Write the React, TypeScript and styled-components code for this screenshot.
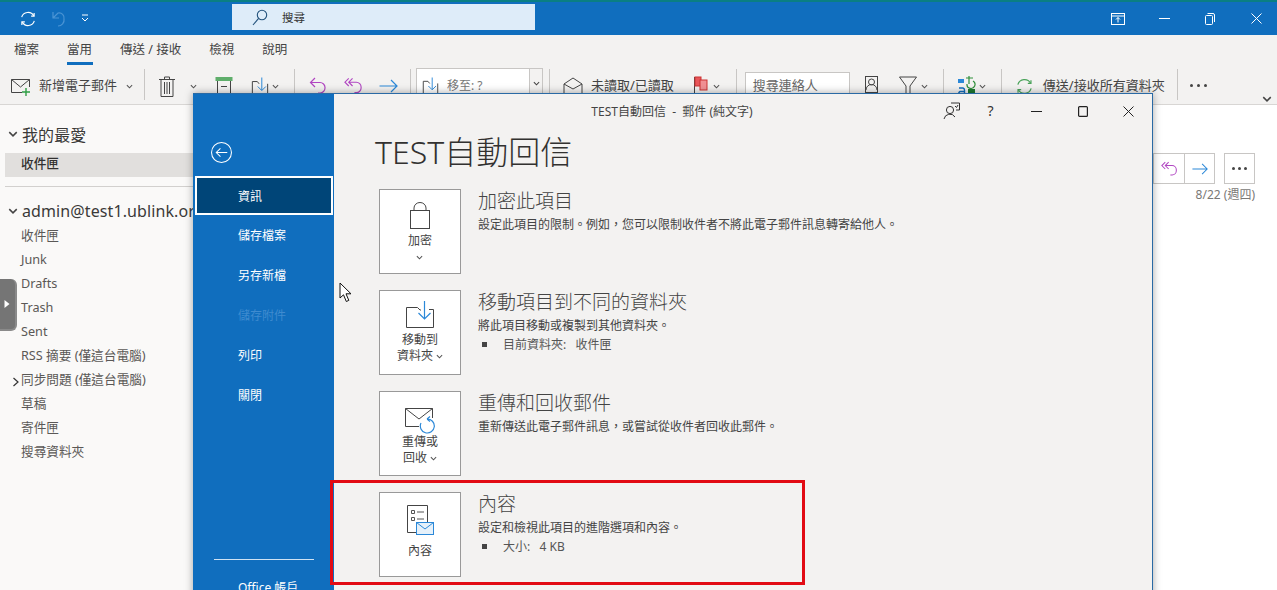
import styled, { createGlobalStyle } from "styled-components";
import type { ReactNode } from "react";

const CJK = `"Noto Sans", "Noto Sans CJK TC", sans-serif`;

const Chevron = ({ size = 7, dark }: { size?: number; dark?: boolean }) => (
  <svg width={size} height={size} viewBox="0 0 8 8" fill="none" stroke={dark ? "#444" : "#555"} strokeWidth="1.2">
    <path d="M1 2.5 L4 5.5 L7 2.5" />
  </svg>
);

const MoveIcon = ({ w = 18, h = 23 }: { w?: number; h?: number }) => (
  <svg width={w} height={h} viewBox="0 0 20 24" fill="none" strokeWidth="1.1">
    <path d="M1.5 6.5 H7 L9 9 M1.5 6.5 V21.5 H18.5 V9" stroke="#444" />
    <path d="M12 2 V16 M7.5 12 L12 16.5 L16.5 12" stroke="#2b88d8" />
  </svg>
);

const SyncIcon = ({ color, size }: { color: string; size: number }) => (
  <svg width={size} height={size} viewBox="0 0 20 20" fill="none" stroke={color} strokeWidth="1.3">
    <path d="M3 8 A7.3 7.3 0 0 1 16.4 6.5 M17 12 A7.3 7.3 0 0 1 3.6 13.5" />
    <path d="M13.5 6.8 H16.8 V3.4 M6.5 13.2 H3.2 V16.6" />
  </svg>
);

const ReplyIcon = ({ color, w = 18 }: { color: string; w?: number }) => (
  <svg width={w} height="20" viewBox="0 0 18 20" fill="none" stroke={color} strokeWidth="1.2">
    <path d="M6 2 L1.5 6.5 L6 11 M1.5 6.5 H11 A5 5 0 0 1 16 11.5 V12 A5 5 0 0 1 11 17 H9" />
  </svg>
);

const ReplyAllIcon = ({ w = 19 }: { w?: number }) => (
  <svg width={w} height="20" viewBox="0 0 20 20" fill="none" stroke="#b146c2" strokeWidth="1.2">
    <path d="M5 2 L1 6 L5 10 M9 2 L5 6 L9 10 M5 6 H13 A5 5 0 0 1 18 11 V12 A5 5 0 0 1 13 17 H11" />
  </svg>
);

const ForwardIcon = ({ w = 19 }: { w?: number }) => (
  <svg width={w} height="14" viewBox="0 0 19 14" fill="none" stroke="#2b88d8" strokeWidth="1.2">
    <path d="M0.5 7 H18 M12 1 L18 7 L12 13" />
  </svg>
);

export default function App() {
  return (
    <Page>
      <GlobalStyle />
      <TitleBar>
        <QuickAccess>
          <SyncIcon color="#ffffff" size={18} />
          <svg width="16" height="18" viewBox="0 0 16 18" fill="none" stroke="#4b94d4" strokeWidth="1.2">
            <path d="M2 2 V8 H8 M2 8 L7 3 A5 5 0 0 1 13 9 A6 6 0 0 1 7 16" />
          </svg>
          <svg width="8" height="9" viewBox="0 0 8 9" fill="none" stroke="#fff" strokeWidth="1">
            <path d="M1 1 H7 M1 4 L4 7 L7 4" />
          </svg>
        </QuickAccess>
        <SearchBox>
          <svg width="16" height="17" viewBox="0 0 16 17" fill="none" stroke="#23527c" strokeWidth="1.1">
            <circle cx="10" cy="6" r="4.7" />
            <path d="M6.6 9.4 L1 16" />
          </svg>
          <span>搜尋</span>
        </SearchBox>
        <WindowButtons>
          <svg width="14" height="12" viewBox="0 0 14 12" fill="none" stroke="#fff" strokeWidth="1">
            <rect x="0.5" y="0.5" width="13" height="11" />
            <path d="M0.5 3 H13.5 M7 9.5 V4.5 M5 6.5 L7 4.5 L9 6.5" />
          </svg>
          <svg width="11" height="11" viewBox="0 0 11 11" stroke="#fff" strokeWidth="1">
            <path d="M0 5.5 H11" />
          </svg>
          <svg width="10" height="12" viewBox="0 0 10 12" fill="none" stroke="#fff" strokeWidth="1">
            <rect x="0.5" y="2.5" width="7" height="9" rx="1" />
            <path d="M2.5 0.5 H8 A1.5 1.5 0 0 1 9.5 2 V9" />
          </svg>
          <svg width="11" height="11" viewBox="0 0 11 11" stroke="#fff" strokeWidth="1">
            <path d="M0.5 0.5 L10.5 10.5 M10.5 0.5 L0.5 10.5" />
          </svg>
        </WindowButtons>
      </TitleBar>

      <TabRow>
        <Tab>檔案</Tab>
        <Tab $active>當用</Tab>
        <Tab>傳送 / 接收</Tab>
        <Tab>檢視</Tab>
        <Tab>說明</Tab>
      </TabRow>

      <Ribbon>
        <RibbonItem $left={11}>
          <svg width="20" height="19" viewBox="0 0 20 19" fill="none">
            <path d="M0.5 2.5 H18.5 V10 M0.5 2.5 V15.5 H11 M0.5 2.5 L9.5 10 L18.5 2.5" stroke="#444" />
            <path d="M15 11 V19 M11 15 H19" stroke="#2f9e44" strokeWidth="1.4" />
          </svg>
        </RibbonItem>
        <RibbonText $left={8}>新增電子郵件</RibbonText>
        <RibbonItem $left={9}><Chevron /></RibbonItem>
        <RibbonDivider $left={11} />
        <RibbonItem $left={14}>
          <svg width="16" height="21" viewBox="0 0 16 21" fill="none" stroke="#444">
            <path d="M0 3.5 H16 M5.5 3.5 V1 H10.5 V3.5 M2 3.5 V20.5 H14 V3.5 M5.5 6 V18 M8 6 V18 M10.5 6 V18" />
          </svg>
        </RibbonItem>
        <RibbonItem $left={15}><Chevron /></RibbonItem>
        <RibbonItem $left={18}>
          <svg width="18" height="18" viewBox="0 0 17 18" fill="none">
            <rect x="0" y="0" width="17" height="4" fill="#5fae6b" />
            <path d="M2 4 V17.5 H15 V4 M5.5 9.5 H11.5" stroke="#444" />
          </svg>
        </RibbonItem>
        <RibbonItem $left={18}><MoveIcon /></RibbonItem>
        <RibbonItem $left={3}><Chevron /></RibbonItem>
        <RibbonDivider $left={15} />
        <RibbonItem $left={14}><ReplyIcon color="#b146c2" /></RibbonItem>
        <RibbonItem $left={17}><ReplyAllIcon /></RibbonItem>
        <RibbonItem $left={16}><ForwardIcon /></RibbonItem>
        <RibbonDivider $left={12} />
        <MoveCombo>
          <MoveComboField>
            <MoveIcon w={17} h={22} />
            <span>移至: ?</span>
          </MoveComboField>
          <MoveComboArrow><Chevron dark /></MoveComboArrow>
        </MoveCombo>
        <RibbonDivider $left={6} />
        <RibbonItem $left={13}>
          <svg width="20" height="18" viewBox="0 0 20 18" fill="none" stroke="#444">
            <path d="M1 7 L10 1 L19 7 V17.5 H1 Z M1 7 L10 12 L19 7" />
          </svg>
        </RibbonItem>
        <RibbonText $left={8}>未讀取/已讀取</RibbonText>
        <RibbonItem $left={20}>
          <svg width="14" height="20" viewBox="0 0 14 20" fill="none">
            <path d="M0.5 1 V20" stroke="#444" />
            <rect x="1" y="1" width="6" height="9" fill="#e8565a" stroke="#c33" />
            <rect x="6" y="4" width="7" height="10" fill="#f09094" stroke="#c33" />
          </svg>
        </RibbonItem>
        <RibbonItem $left={5}><Chevron /></RibbonItem>
        <RibbonDivider $left={16} />
        <ContactSearch>搜尋連絡人</ContactSearch>
        <RibbonItem $left={15}>
          <svg width="13" height="21" viewBox="0 0 13 21" fill="none" stroke="#444">
            <rect x="0.5" y="0.5" width="12" height="20" />
            <circle cx="6.5" cy="6" r="3" />
            <path d="M1 14 A5.5 5.5 0 0 1 12 14 M0.5 16.5 H12.5" />
          </svg>
        </RibbonItem>
        <RibbonItem $left={21}>
          <svg width="18" height="21" viewBox="0 0 18 21" fill="none" stroke="#444">
            <path d="M0.5 1 H17.5 L11 10 V20 H7 V10 Z" />
          </svg>
        </RibbonItem>
        <RibbonItem $left={4}><Chevron /></RibbonItem>
        <RibbonDivider $left={15} />
        <RibbonItem $left={13}>
          <svg width="19" height="22" viewBox="0 0 19 22" fill="none">
            <path d="M1 4 H7 V8 H1 Z" fill="#2b88d8" />
            <path d="M2 13 H6 A2 2 0 0 1 7.5 15 V21 H3 A2.5 2.5 0 0 1 3 16.5 H7.5" stroke="#106ebe" strokeWidth="1.4" />
            <path d="M9 3 H16 M12 1 V9 M16 6 A4 4 0 1 1 10 9" stroke="#2f8f3a" strokeWidth="1.2" />
            <path d="M11 14 H18 V21 H11 Z" fill="#1c7a32" />
          </svg>
        </RibbonItem>
        <RibbonItem $left={3}><Chevron /></RibbonItem>
        <RibbonDivider $left={15} />
        <RibbonItem $left={13}><SyncIcon color="#4aa35a" size={19} /></RibbonItem>
        <RibbonText $left={9}>傳送/接收所有資料夾</RibbonText>
        <RibbonDivider $left={12} />
        <RibbonDots $left={12}>
          <i /><i /><i />
        </RibbonDots>
        <CollapseRibbon><Chevron size={10} dark /></CollapseRibbon>
      </Ribbon>

      <Body>
        <FolderPane>
          <FolderHeading $pad={7}><Chevron size={10} dark />我的最愛</FolderHeading>
          <FolderRow $selected>收件匣</FolderRow>
          <PaneRule />
          <FolderHeading $pad={0}><Chevron size={10} dark />admin@test1.ublink.org</FolderHeading>
          {["收件匣", "Junk", "Drafts", "Trash", "Sent", "RSS 摘要 (僅這台電腦)"].map((f) => (
            <FolderRow key={f}>{f}</FolderRow>
          ))}
          <FolderRow>
            <Expander>
              <svg width="8" height="10" viewBox="0 0 8 10" fill="none" stroke="#333" strokeWidth="1.2">
                <path d="M1.5 1 L6 5 L1.5 9" />
              </svg>
            </Expander>
            同步問題 (僅這台電腦)
          </FolderRow>
          {["草稿", "寄件匣", "搜尋資料夾"].map((f) => (
            <FolderRow key={f}>{f}</FolderRow>
          ))}
        </FolderPane>
        <ReadingPane>
          <ReadingActions>
            <ActionGroup>
              <ActionButton $joined><ReplyAllIcon w={17} /></ActionButton>
              <ActionButton><ForwardIcon w={16} /></ActionButton>
            </ActionGroup>
            <ActionButton><Dots><i /><i /><i /></Dots></ActionButton>
          </ReadingActions>
          <MailDate>8/22 (週四)</MailDate>
        </ReadingPane>
      </Body>

      <SideHandle>
        <svg width="6" height="8" viewBox="0 0 6 8"><path d="M0.5 0 L5.5 4 L0.5 8 Z" fill="#fff" /></svg>
      </SideHandle>

      <Backstage>
        <BackstageNav>
          <BackButton>
            <svg width="21" height="21" viewBox="0 0 20 20" fill="none" stroke="#fff" strokeWidth="1">
              <circle cx="10" cy="10" r="9.5" />
              <path d="M15.5 10 H5 M9 6 L5 10 L9 14" />
            </svg>
          </BackButton>
          <NavItem $active>資訊</NavItem>
          <NavItem>儲存檔案</NavItem>
          <NavItem>另存新檔</NavItem>
          <NavItem $disabled>儲存附件</NavItem>
          <NavItem>列印</NavItem>
          <NavItem>關閉</NavItem>
          <NavFooter>
            <NavRule />
            <NavItem>Office 帳戶</NavItem>
          </NavFooter>
        </BackstageNav>

        <BackstageMain>
          <DialogBar>
            <DialogCaption>TEST自動回信  -  郵件 (純文字)</DialogCaption>
            <DialogControls>
              <svg width="17" height="18" viewBox="0 0 17 18" fill="none" stroke="#333" strokeWidth="1">
                <circle cx="7" cy="8" r="3.6" />
                <path d="M1 17 A6 6 0 0 1 12 15 M8 1 H16.5 V8 H13 M12 4 L13.5 5.5 L15 3" />
              </svg>
              <HelpMark>?</HelpMark>
              <svg width="11" height="11" viewBox="0 0 11 11" stroke="#222" strokeWidth="1">
                <path d="M0 5.5 H11" />
              </svg>
              <svg width="10" height="11" viewBox="0 0 10 11" fill="none" stroke="#222" strokeWidth="1.2">
                <rect x="0.6" y="0.6" width="8.8" height="9.8" rx="1" />
              </svg>
              <svg width="11" height="11" viewBox="0 0 11 11" stroke="#222" strokeWidth="1">
                <path d="M0.5 0.5 L10.5 10.5 M10.5 0.5 L0.5 10.5" />
              </svg>
            </DialogControls>
          </DialogBar>

          <PageTitle>TEST自動回信</PageTitle>

          <InfoList>
            <InfoSection
              iconHeight={27}
              labelGap={4}
              icon={
                <svg width="20" height="27" viewBox="0 0 20 27" fill="none" stroke="#444">
                  <path d="M4 8 V6 A6 5.5 0 0 1 16 6 V8" />
                  <rect x="0.5" y="8.5" width="19" height="18" />
                </svg>
              }
              label={<>加密<br /><Chevron /></>}
              title="加密此項目"
              text="設定此項目的限制。例如，您可以限制收件者不將此電子郵件訊息轉寄給他人。"
            />
            <InfoSection
              iconHeight={25}
              labelGap={4}
              icon={
                <svg width="28" height="27" viewBox="0 0 28 27" fill="none" strokeWidth="1">
                  <path d="M0.5 9 V26.5 H27.5 V8.5 H23 M0.5 9 V6.5 H11.5 L14 9 H15" stroke="#444" />
                  <path d="M18.5 0 V18 M12.5 12 L18.5 18 L24.5 12" stroke="#2b88d8" strokeWidth="1.2" />
                </svg>
              }
              label={<>移動到<br />資料夾 <Chevron /></>}
              title="移動項目到不同的資料夾"
              text="將此項目移動或複製到其他資料夾。"
              detail="目前資料夾:   收件匣"
            />
            <InfoSection
              iconHeight={30}
              labelGap={0}
              icon={
                <svg width="30" height="26" viewBox="0 0 30 26" fill="none" strokeWidth="1">
                  <path d="M14 18.5 H0.5 V0.5 H27.5 V10 M0.5 0.5 L14 11 L27.5 0.5" stroke="#444" />
                  <path d="M22 11 A7 7 0 1 1 16 15 M22 11 L25 8.5 M22 11 L25 13.5" stroke="#2b88d8" strokeWidth="1.2" />
                </svg>
              }
              label={<>重傳或<br />回收 <Chevron /></>}
              title="重傳和回收郵件"
              text="重新傳送此電子郵件訊息，或嘗試從收件者回收此郵件。"
            />
            <InfoSection
              iconHeight={30}
              labelGap={8}
              icon={
                <svg width="27" height="30" viewBox="0 0 27 30" fill="none" strokeWidth="1">
                  <path d="M20.5 17 V0.5 H0.5 V27.5 H9" stroke="#444" />
                  <path d="M4.5 5.5 H7.5 V8.5 H4.5 Z M4.5 12.5 H7.5 V15.5 H4.5 Z M10 7 H17 M10 14 H17" stroke="#555" />
                  <rect x="9.5" y="17.5" width="17" height="12" fill="#e6f1fa" stroke="#2b88d8" />
                  <path d="M9.5 17.5 L18 24 L26.5 17.5" stroke="#2b88d8" />
                </svg>
              }
              label="內容"
              title="內容"
              text="設定和檢視此項目的進階選項和內容。"
              detail="大小:   4 KB"
            />
          </InfoList>
        </BackstageMain>
      </Backstage>

      <Highlight />

      <MouseCursor>
        <svg width="14" height="21" viewBox="0 0 14 21">
          <path d="M1 1 V16 L4.5 12.8 L7.3 19.5 L9.8 18.4 L7 11.8 H12 Z" fill="#fff" stroke="#111" strokeWidth="1" />
        </svg>
      </MouseCursor>
    </Page>
  );
}

function InfoSection(props: {
  icon: ReactNode;
  iconHeight: number;
  labelGap: number;
  label: ReactNode;
  title: string;
  text: string;
  detail?: string;
}) {
  return (
    <InfoRow>
      <InfoButton>
        <InfoIcon $height={props.iconHeight}>{props.icon}</InfoIcon>
        <InfoLabel $gap={props.labelGap}>{props.label}</InfoLabel>
      </InfoButton>
      <InfoText>
        <InfoTitle>{props.title}</InfoTitle>
        <InfoDesc>{props.text}</InfoDesc>
        {props.detail && <InfoDetail>{props.detail}</InfoDetail>}
      </InfoText>
    </InfoRow>
  );
}

/* ===== styled-components ===== */

const GlobalStyle = createGlobalStyle`
  * { box-sizing: border-box; }
  html, body { margin: 0; padding: 0; background: #fff; }
  body { font-family: ${CJK}; color: #323130; }
`;

const Page = styled.div`
  position: relative;
  width: 1277px;
  height: 590px;
  overflow: hidden;
  display: flex;
  flex-direction: column;
  background: #fff;
`;

const TitleBar = styled.header`
  height: 35px;
  flex: none;
  display: flex;
  align-items: center;
  background: #106ebe;
  border-top: 2px solid #0a7f83;
`;

const QuickAccess = styled.div`
  width: 232px;
  padding-left: 19px;
  display: flex;
  align-items: center;
  gap: 14px;
`;

const SearchBox = styled.div`
  width: 303px;
  height: 26px;
  margin-top: -3px;
  padding-left: 20px;
  display: flex;
  align-items: center;
  gap: 14px;
  background: #deecf9;
  font-size: 11.5px;
  color: #333;
`;

const WindowButtons = styled.div`
  margin-left: auto;
  margin-right: -2px;
  display: grid;
  grid-template-columns: repeat(4, 46px);
  justify-items: center;
  align-items: center;
`;

const TabRow = styled.nav`
  height: 33px;
  flex: none;
  display: flex;
  padding-left: 14px;
  gap: 28px;
  background: #f3f2f1;
`;

const Tab = styled.div<{ $active?: boolean }>`
  position: relative;
  padding-top: 6px;
  font-size: 12.5px;
  line-height: 17px;
  color: #444;
  white-space: nowrap;

  &::after {
    content: "";
    display: ${(p) => (p.$active ? "block" : "none")};
    position: absolute;
    left: 0;
    right: -1px;
    top: 27px;
    height: 3px;
    background: #106ebe;
  }
`;

const Ribbon = styled.div`
  position: relative;
  height: 37px;
  flex: none;
  display: flex;
  align-items: flex-start;
  background: #f3f2f1;
  border-bottom: 1px solid #d8d6d4;
`;

const RibbonItem = styled.div<{ $left: number }>`
  margin-left: ${(p) => p.$left}px;
  margin-top: 6px;
  height: 24px;
  display: flex;
  align-items: center;
  flex: none;
`;

const RibbonText = styled.span<{ $left: number }>`
  margin-left: ${(p) => p.$left}px;
  margin-top: 5px;
  height: 24px;
  line-height: 24px;
  font-size: 13px;
  color: #444;
  white-space: nowrap;
  flex: none;
`;

const RibbonDivider = styled.div<{ $left: number }>`
  margin-left: ${(p) => p.$left}px;
  margin-top: 1px;
  width: 1px;
  height: 31px;
  flex: none;
  background: #c8c6c4;
`;

const MoveCombo = styled.div`
  margin-left: 5px;
  width: 127px;
  height: 30px;
  flex: none;
  display: flex;
  background: #fff;
  border: 1px solid #c8c6c4;
`;

const MoveComboField = styled.div`
  flex: 1;
  padding-left: 5px;
  display: flex;
  align-items: flex-start;
  gap: 8px;
  padding-top: 6px;
  font-size: 12px;
  line-height: 22px;
  color: #777;
`;

const MoveComboArrow = styled.div`
  width: 13px;
  padding-top: 11px;
  display: flex;
  justify-content: center;
  border-left: 1px solid #c8c6c4;
  background: #f3f2f1;
`;

const ContactSearch = styled.div`
  margin-left: 8px;
  margin-top: 4px;
  width: 105px;
  height: 30px;
  padding: 3px 0 0 7px;
  flex: none;
  font-size: 13px;
  line-height: 18px;
  color: #666;
  background: #fff;
  border: 1px solid #c8c6c4;
`;

const RibbonDots = styled.div<{ $left: number }>`
  margin-left: ${(p) => p.$left}px;
  margin-top: 16px;
  display: flex;
  gap: 4px;

  i {
    width: 3px;
    height: 3px;
    border-radius: 50%;
    background: #444;
  }
`;

const CollapseRibbon = styled.div`
  position: absolute;
  right: 5px;
  bottom: 0;
  line-height: 0;
  height: 10px;
`;

const Body = styled.main`
  flex: 1;
  display: flex;
  min-height: 0;
`;

const FolderPane = styled.aside`
  width: 193px;
  flex: none;
  padding: 16px 0 0 5px;
  background: #faf9f8;
  white-space: nowrap;
`;

const FolderHeading = styled.div<{ $pad: number }>`
  height: ${(p) => 25 + p.$pad}px;
  padding-bottom: ${(p) => p.$pad}px;
  display: flex;
  align-items: center;
  gap: 4px;
  margin-left: 3px;
  font-size: 16px;
  letter-spacing: 0.1px;
  color: #3b3a39;

  svg {
    flex: none;
  }
`;

const FolderRow = styled.div<{ $selected?: boolean }>`
  position: relative;
  height: 24px;
  padding-left: 16px;
  line-height: ${(p) => (p.$selected ? "20px" : "24px")};
  font-size: 12.67px;
  color: ${(p) => (p.$selected ? "#323130" : "#5a5856")};
  font-weight: ${(p) => (p.$selected ? 500 : 400)};
  background: ${(p) => (p.$selected ? "#e1dfdd" : "transparent")};
`;

const Expander = styled.span`
  position: absolute;
  left: 7px;
  top: 3px;
`;

const PaneRule = styled.div`
  height: 1px;
  margin: 9px 0 11px;
  background: #d2d0ce;
`;

const ReadingPane = styled.section`
  flex: 1;
  padding: 48px 22px 0 0;
  display: flex;
  flex-direction: column;
  align-items: flex-end;
`;

const ReadingActions = styled.div`
  display: flex;
  gap: 9px;
`;

const ActionGroup = styled.div`
  display: flex;
`;

const ActionButton = styled.div<{ $joined?: boolean }>`
  width: 31px;
  height: 31px;
  display: flex;
  align-items: center;
  justify-content: center;
  border: 1px solid #c8c6c4;
  ${(p) => (p.$joined ? "border-right: 0;" : "")}
`;

const Dots = styled.div`
  display: flex;
  gap: 3px;

  i {
    width: 3px;
    height: 3px;
    border-radius: 50%;
    background: #444;
  }
`;

const MailDate = styled.div`
  margin-top: 3px;
  font-size: 12px;
  line-height: 16px;
  color: #7a7876;
`;

const SideHandle = styled.div`
  position: absolute;
  left: 0;
  top: 279px;
  width: 17px;
  height: 52px;
  padding-left: 4px;
  display: flex;
  align-items: center;
  background: #757575;
  border-right: 2px solid #8a8a8a;
  border-bottom: 2px solid #8a8a8a;
  border-radius: 0 6px 6px 0;
`;

const Backstage = styled.div`
  position: absolute;
  left: 193px;
  top: 93px;
  width: 960px;
  height: 520px;
  display: flex;
  background: #f3f2f1;
  border: 1px solid #2a6aa5;
  border-left: 0;
  box-shadow: 0 0 8px rgba(0, 0, 0, 0.35);
`;

const BackstageNav = styled.nav`
  position: relative;
  width: 141px;
  flex: none;
  padding-top: 47px;
  background: #106ebe;
`;

const BackButton = styled.div`
  height: 35px;
  padding: 1px 0 0 18px;
  line-height: 0;
`;

const NavItem = styled.div<{ $active?: boolean; $disabled?: boolean }>`
  width: ${(p) => (p.$active ? "138px" : "auto")};
  height: ${(p) => (p.$active ? "39px" : "40px")};
  margin: ${(p) => (p.$active ? "0 0 0 2px" : "0")};
  padding-left: ${(p) => (p.$active ? "41px" : "45px")};
  display: flex;
  align-items: center;
  font-size: 12px;
  white-space: nowrap;
  color: ${(p) => (p.$disabled ? "#3f8bcf" : "#fff")};
  background: ${(p) => (p.$active ? "#004578" : "transparent")};
  border: ${(p) => (p.$active ? "2px solid #fff" : "0")};
`;

const NavFooter = styled.div`
  position: absolute;
  left: 0;
  right: 0;
  top: 465px;
`;

const NavRule = styled.div`
  height: 1px;
  margin: 0 20px 7px 21px;
  background: #cfe2f3;
`;

const BackstageMain = styled.div`
  flex: 1;
  padding-left: 41px;
`;

const DialogBar = styled.div`
  position: relative;
  height: 33px;
  margin-left: -41px;
  display: flex;
  align-items: center;
`;

const DialogCaption = styled.div`
  width: 100%;
  padding-right: 142px;
  text-align: center;
  font-size: 12px;
  color: #444;
  white-space: pre;
`;

const DialogControls = styled.div`
  position: absolute;
  right: -3px;
  top: 8px;
  display: grid;
  grid-template-columns: 39px 39px 53px 39px 53px;
  justify-items: center;
  align-items: center;
`;

const HelpMark = styled.span`
  font-size: 14px;
  line-height: 18px;
  color: #333;
`;

const PageTitle = styled.h1`
  margin: 0;
  height: 62px;
  padding-top: 3px;
  font-size: 32px;
  line-height: 44px;
  font-weight: 300;
  color: #323130;
  white-space: nowrap;
`;

const InfoList = styled.div`
  display: flex;
  flex-direction: column;
  gap: 16px;
  padding-left: 4px;
`;

const InfoRow = styled.section`
  display: flex;
  gap: 17px;
`;

const InfoButton = styled.div`
  width: 82px;
  height: 85px;
  flex: none;
  padding-top: 12px;
  display: flex;
  flex-direction: column;
  align-items: center;
  background: #fff;
  border: 1px solid #999;
`;

const InfoIcon = styled.div<{ $height: number }>`
  height: ${(p) => p.$height}px;
  display: flex;
  align-items: flex-end;
`;

const InfoLabel = styled.div<{ $gap: number }>`
  margin-top: ${(p) => p.$gap}px;
  font-size: 12px;
  line-height: 16px;
  text-align: center;
  color: #444;
`;

const InfoText = styled.div`
  padding-top: 0;
`;

const InfoTitle = styled.h2`
  margin: 0;
  font-size: 19px;
  line-height: 24px;
  font-weight: 300;
  color: #444;
  white-space: nowrap;
`;

const InfoDesc = styled.p`
  margin: 0;
  font-size: 12px;
  line-height: 23px;
  color: #444;
  white-space: nowrap;
`;

const InfoDetail = styled.div`
  position: relative;
  padding-left: 25px;
  font-size: 12px;
  line-height: 15px;
  color: #555;
  white-space: pre;

  &::before {
    content: "";
    position: absolute;
    left: 4px;
    top: 5px;
    width: 5px;
    height: 5px;
    background: #444;
  }
`;

const Highlight = styled.div`
  position: absolute;
  left: 330px;
  top: 480px;
  width: 475px;
  height: 105px;
  border: 3px solid #e20b14;
  pointer-events: none;
`;

const MouseCursor = styled.div`
  position: absolute;
  left: 339px;
  top: 282px;
  line-height: 0;
`;
